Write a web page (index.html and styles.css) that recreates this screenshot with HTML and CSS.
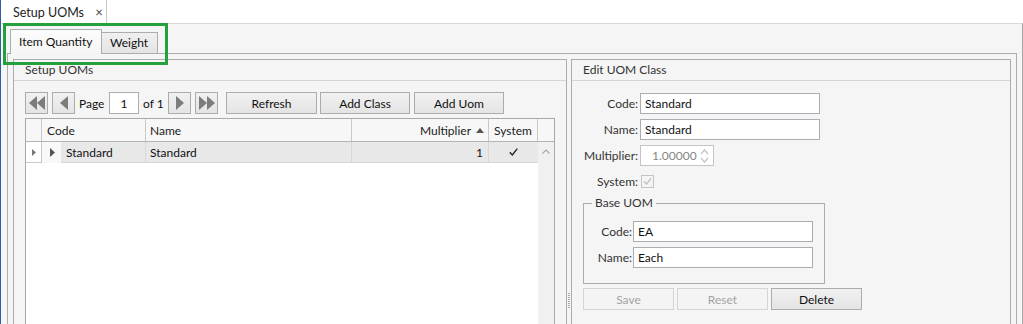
FILE: index.html
```html
<!DOCTYPE html>
<html lang="en">
<head>
  <meta charset="UTF-8" />
  <title>Setup UOMs</title>
  <link rel="stylesheet" href="styles.css">
</head>
<body>

  <div class="doc-tabs">
    <div class="doc-tab">Setup UOMs <span class="close">×</span></div>
  </div>

  <div class="doc-body">
    <div class="tab-strip">
      <div class="tab active">Item Quantity</div>
      <div class="tab">Weight</div>
    </div>

    <div class="tab-panel">
      <div class="groupbox list-box">
        <div class="gb-header">Setup UOMs</div>
        <div class="gb-body">
          <div class="pager">
            <button class="btn icon-btn">
              <svg width="16" height="14" viewBox="0 0 16 14"><polygon points="8,0 0,7 8,14" fill="#7c7c7c"/><polygon points="16,0 8,7 16,14" fill="#7c7c7c"/></svg>
            </button>
            <button class="btn icon-btn gap4">
              <svg width="8" height="14" viewBox="0 0 8 14"><polygon points="8,0 0,7 8,14" fill="#7c7c7c"/></svg>
            </button>
            <span class="page-label">Page</span>
            <input class="page-input" type="text" value="1" />
            <span class="of-label">of 1</span>
            <button class="btn icon-btn">
              <svg width="8" height="14" viewBox="0 0 8 14"><polygon points="0,0 8,7 0,14" fill="#7c7c7c"/></svg>
            </button>
            <button class="btn icon-btn gap4">
              <svg width="16" height="14" viewBox="0 0 16 14"><polygon points="0,0 8,7 0,14" fill="#7c7c7c"/><polygon points="8,0 16,7 8,14" fill="#7c7c7c"/></svg>
            </button>
            <button class="btn text-btn refresh">Refresh</button>
            <button class="btn text-btn add-class">Add Class</button>
            <button class="btn text-btn add-uom">Add Uom</button>
          </div>

          <div class="grid">
            <div class="grid-head">
              <div class="hcell"></div>
              <div class="hcell">Code</div>
              <div class="hcell">Name</div>
              <div class="hcell right">Multiplier
                <svg class="sort" width="8" height="5" viewBox="0 0 8 5"><polygon points="0,5 4,0 8,5" fill="#555"/></svg>
              </div>
              <div class="hcell center">System</div>
              <div class="hcell last"></div>
            </div>
            <div class="grid-main">
              <div class="rows">
                <div class="row">
                  <div class="ind">
                    <svg width="4" height="7" viewBox="0 0 4 7"><polygon points="0,0 4,3.5 0,7" fill="#777"/></svg>
                  </div>
                  <div class="expand">
                    <svg width="5" height="9" viewBox="0 0 5 9"><polygon points="0,0 5,4.5 0,9" fill="#555"/></svg>
                  </div>
                  <div class="cell code">Standard</div>
                  <div class="cell name">Standard</div>
                  <div class="cell mult">1</div>
                  <div class="cell sys">
                    <svg width="9" height="8" viewBox="0 0 9 8"><path d="M0.8 4.2 L3.3 7 L8.3 0.6" fill="none" stroke="#1e1e1e" stroke-width="1.3"/></svg>
                  </div>
                </div>
              </div>
              <div class="scroll">
                <svg class="chev" width="8" height="5" viewBox="0 0 8 5"><polyline points="0.5,4.5 4,1 7.5,4.5" fill="none" stroke="#a8a8a8" stroke-width="1.2"/></svg>
              </div>
            </div>
          </div>
        </div>
      </div>

      <div class="splitter"><div class="grip"></div></div>

      <div class="groupbox edit-box">
        <div class="gb-header">Edit UOM Class</div>
        <div class="edit-body">
          <div class="field">
            <label>Code:</label>
            <div class="text-input">Standard</div>
          </div>
          <div class="field">
            <label>Name:</label>
            <div class="text-input">Standard</div>
          </div>
          <div class="field">
            <label>Multiplier:</label>
            <div class="spin">
              <span>1.00000</span>
              <svg width="9" height="16" viewBox="0 0 9 16"><polyline points="1,6 4.5,2 8,6" fill="none" stroke="#c4c4c4" stroke-width="1.2"/><polyline points="1,10 4.5,14 8,10" fill="none" stroke="#c4c4c4" stroke-width="1.2"/></svg>
            </div>
          </div>
          <div class="field">
            <label>System:</label>
            <div class="check">
              <svg width="11" height="11" viewBox="0 0 11 11"><path d="M2 5.5 L4.5 8 L9 2.5" fill="none" stroke="#c2c2c2" stroke-width="1.3"/></svg>
            </div>
          </div>

          <fieldset class="base-group">
            <legend>Base UOM</legend>
            <div class="field">
              <label>Code:</label>
              <div class="text-input">EA</div>
            </div>
            <div class="field">
              <label>Name:</label>
              <div class="text-input">Each</div>
            </div>
          </fieldset>

          <div class="actions">
            <button class="btn text-btn" disabled>Save</button>
            <button class="btn text-btn" disabled>Reset</button>
            <button class="btn text-btn">Delete</button>
          </div>
        </div>
      </div>
    </div>
  </div>

  <div class="highlight"></div>

</body>
</html>
```

FILE: styles.css
```css
* {
  box-sizing: border-box;
}

body {
  margin: 0;
  width: 1023px;
  height: 324px;
  overflow: hidden;
  position: relative;
  display: flex;
  flex-direction: column;
  background: #fff;
  border-left: 1px solid #2f5ea8;
  font-family: Lato, "Liberation Sans", sans-serif;
  font-size: 12px;
  color: #111;
}

/* document tab */
.doc-tabs {
  display: flex;
  height: 23px;
}

.doc-tab {
  width: 106px;
  border-right: 1px solid #c8c8c8;
  padding: 1px 0 0 12px;
  line-height: 22px;
  font-size: 12.5px;
  color: #222;
}

.close {
  display: inline-block;
  margin-left: 8px;
  font-size: 13px;
  color: #444;
}

/* the window is cut at the bottom, so the lower frame edges are not drawn */
.doc-body {
  flex: 1;
  display: flex;
  flex-direction: column;
  border-top: 1px solid #d9d9d9;
  border-right: 1px solid #a6a6a6;
  background: #f5f5f5;
  padding: 0 5px 0 6px;
}

/* inner tabs */
.tab-strip {
  display: flex;
  align-items: flex-end;
  height: 29px;
  padding-left: 3px;
}

.tab {
  width: 57px;
  height: 21px;
  margin-left: -1px;
  padding-left: 8px;
  border: 1px solid #acacac;
  border-bottom: none;
  background: linear-gradient(#f0f0f0, #e4e4e4);
  line-height: 19px;
}

.tab.active {
  position: relative;
  z-index: 1;
  width: 92px;
  height: 25px;
  margin-left: 0;
  margin-bottom: -1px;
  padding-top: 2px;
  background: linear-gradient(#fcfcfc, #f5f5f5);
  line-height: 20px;
}

.tab-panel {
  flex: 1;
  display: flex;
  border: 1px solid #acacac;
  border-bottom: none;
  background: #f5f5f5;
  padding: 5px 5px 0;
}

/* group boxes */
.groupbox {
  display: flex;
  flex-direction: column;
  border: 1px solid #acacac;
  border-bottom: none;
}

.list-box {
  width: 554px;
}

.edit-box {
  width: 440px;
}

.gb-header {
  height: 21px;
  border-bottom: 1px solid #d5d5d5;
  padding-left: 11px;
  line-height: 20px;
  color: #333;
}

.gb-body {
  flex: 1;
  display: flex;
  flex-direction: column;
  padding: 11px 11px 0;
}

/* pager */
.pager {
  display: flex;
  align-items: center;
  height: 22px;
}

.btn {
  height: 22px;
  padding: 0;
  border: 1px solid #acacac;
  background: linear-gradient(#f1f1f1, #e4e4e4);
  font-family: inherit;
  font-size: 12px;
  color: #111;
}

.btn:disabled {
  border-color: #d5d5d5;
  background: #f4f4f4;
  color: #a3a3a3;
}

.icon-btn {
  width: 23px;
  display: flex;
  align-items: center;
  justify-content: center;
}

.gap4 {
  margin-left: 4px;
}

.page-label {
  width: 30px;
  margin-left: 4px;
}

.page-input {
  width: 30px;
  height: 22px;
  border: 1px solid #abadb3;
  background: #fff;
  font-family: inherit;
  font-size: 12px;
  color: #111;
  text-align: center;
  padding: 0;
}

.of-label {
  width: 25px;
  margin-left: 4px;
}

.text-btn {
  width: 91px;
}

.refresh {
  margin-left: 8px;
}

.add-class {
  width: 90px;
  margin-left: 3px;
}

.add-uom {
  width: 90px;
  margin-left: 4px;
}

/* grid */
.grid {
  flex: 1;
  display: flex;
  flex-direction: column;
  width: 530px;
  margin-top: 4px;
  border: 1px solid #a8a8a8;
  border-bottom: none;
  background: #fff;
}

.grid-head {
  display: grid;
  grid-template-columns: 16px 104px 206px 137px 49px 16px;
  height: 23px;
  border-bottom: 1px solid #b4b4b4;
  background: #f7f7f7;
}

.hcell {
  display: flex;
  align-items: center;
  padding-left: 4px;
  border-right: 1px solid #c8c8c8;
  color: #222;
}

.hcell:nth-child(2) {
  padding-left: 5px;
}

.hcell.right {
  justify-content: flex-end;
  padding-right: 4px;
}

.hcell.center {
  justify-content: center;
  padding-left: 0;
}

.hcell.last {
  border-right: none;
}

.sort {
  margin-left: 5px;
}

.grid-main {
  flex: 1;
  display: flex;
}

.rows {
  width: 512px;
}

.row {
  display: flex;
  height: 21px;
}

.ind {
  width: 16px;
  display: flex;
  align-items: center;
  padding-left: 6px;
  border-right: 1px solid #c8c8c8;
  border-bottom: 1px solid #c8c8c8;
}

.expand {
  width: 19px;
  display: flex;
  align-items: center;
  padding-left: 8px;
  background: #f8f8f8;
}

.cell {
  display: flex;
  align-items: center;
  background: #e8e8e8;
  border-right: 1px solid #d8d8d8;
  border-bottom: 1px solid #d8d8d8;
}

.cell.code {
  width: 85px;
  padding-left: 5px;
}

.cell.name {
  width: 206px;
  padding-left: 4px;
}

.cell.mult {
  width: 137px;
  justify-content: flex-end;
  padding-right: 5px;
}

.cell.sys {
  width: 49px;
  justify-content: center;
  border-right: none;
}

.scroll {
  width: 16px;
  background: #f0f0f0;
  display: flex;
  justify-content: center;
  align-items: flex-start;
}

.chev {
  margin-top: 7px;
}

/* splitter */
.splitter {
  width: 4px;
}

.grip {
  width: 2px;
  height: 16px;
  margin: 234px 0 0 1px;
  background: repeating-linear-gradient(#a8a8a8 0 1px, transparent 1px 2px);
}

/* edit form */
.edit-body {
  padding-top: 12px;
}

.field {
  display: flex;
  align-items: center;
  height: 21px;
  margin-bottom: 5px;
}

.field label {
  width: 66px;
  margin-right: 2px;
  text-align: right;
  color: #333;
}

.text-input {
  width: 180px;
  height: 21px;
  border: 1px solid #abadb3;
  background: #fff;
  padding-left: 4px;
  line-height: 19px;
}

.spin {
  display: flex;
  align-items: center;
  justify-content: space-between;
  width: 74px;
  height: 21px;
  border: 1px solid #c4c4c4;
  background: #fff;
  padding: 0 4px 0 11px;
  color: #858585;
}

.check {
  width: 13px;
  height: 13px;
  margin-left: 1px;
  border: 1px solid #c4c4c4;
  background: #f4f4f4;
  display: flex;
  align-items: center;
  justify-content: center;
}

.base-group {
  width: 242px;
  min-width: 0;
  margin: 0 0 0 11px;
  padding: 0 0 15px;
  border: 1px solid #acacac;
}

.base-group legend {
  margin-left: 8px;
  padding: 0 3px;
  line-height: 12px;
  color: #333;
}

.base-group .field:first-of-type {
  margin-top: 12px;
}

.base-group .field:last-child {
  margin-bottom: 0;
}

.base-group label {
  width: 48px;
  margin-right: 1px;
}

.actions {
  display: flex;
  gap: 3px;
  margin: 4px 0 0 11px;
}

/* annotation frame */
.highlight {
  position: absolute;
  left: 2px;
  top: 23px;
  width: 165px;
  height: 42px;
  border: 3px solid #25a03b;
}
```
